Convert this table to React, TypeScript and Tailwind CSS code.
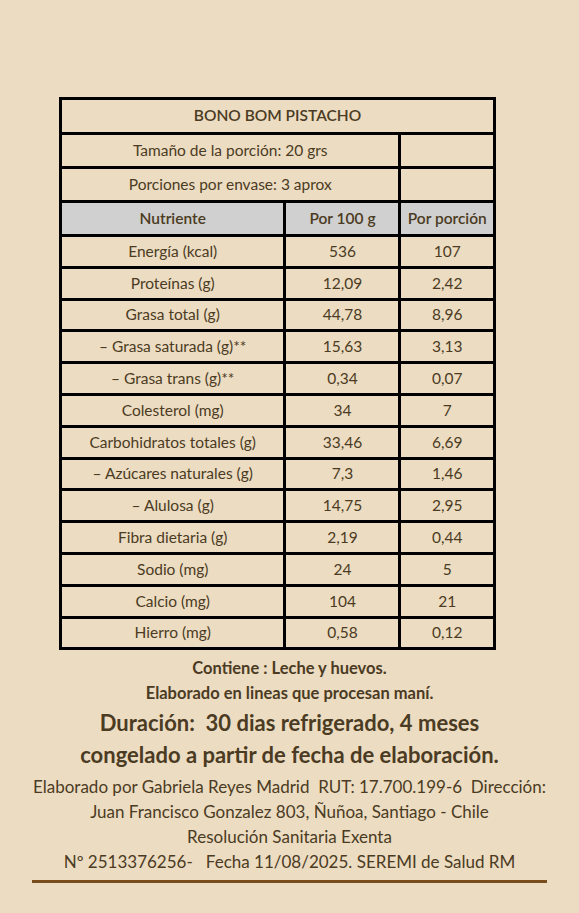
import React from 'react';

const rows: [string, string, string][] = [
  ['Energía (kcal)', '536', '107'],
  ['Proteínas (g)', '12,09', '2,42'],
  ['Grasa total (g)', '44,78', '8,96'],
  ['– Grasa saturada (g)**', '15,63', '3,13'],
  ['– Grasa trans (g)**', '0,34', '0,07'],
  ['Colesterol (mg)', '34', '7'],
  ['Carbohidratos totales (g)', '33,46', '6,69'],
  ['– Azúcares naturales (g)', '7,3', '1,46'],
  ['– Alulosa (g)', '14,75', '2,95'],
  ['Fibra dietaria (g)', '2,19', '0,44'],
  ['Sodio (mg)', '24', '5'],
  ['Calcio (mg)', '104', '21'],
  ['Hierro (mg)', '0,58', '0,12'],
];

export default function App() {
  return (
    <div className="min-h-[913px] w-[579px] bg-[#ecdcc2] text-[#4b3b22] font-['Lato','Open_Sans',sans-serif] pt-[97px]">
      {/* TABLA NUTRICIONAL */}
      <table className="ml-[59px] w-[437px] border-collapse border-[3px] border-black text-[15.5px] text-center">
        <colgroup>
          <col className="w-[226px]" />
          <col className="w-[116px]" />
          <col className="w-[95px]" />
        </colgroup>
        <tbody>
          <tr className="h-[35px]">
            <td colSpan={3} className="border-[3px] border-black font-semibold">BONO BOM PISTACHO</td>
          </tr>
          <tr className="h-[34px]">
            <td colSpan={2} className="border-[3px] border-black">Tamaño de la porción: 20 grs</td>
            <td className="border-[3px] border-black"></td>
          </tr>
          <tr className="h-[34px]">
            <td colSpan={2} className="border-[3px] border-black">Porciones por envase: 3 aprox</td>
            <td className="border-[3px] border-black"></td>
          </tr>
          <tr className="h-[34px] bg-[#d0d0d0] font-semibold">
            <td className="border-[3px] border-black">Nutriente</td>
            <td className="border-[3px] border-black">Por 100 g</td>
            <td className="border-[3px] border-black">Por porción</td>
          </tr>
          {rows.map((r, i) => (
            <tr key={i} className="h-[31.8px]">
              <td className="border-[3px] border-black">{r[0]}</td>
              <td className="border-[3px] border-black">{r[1]}</td>
              <td className="border-[3px] border-black">{r[2]}</td>
            </tr>
          ))}
        </tbody>
      </table>

      <div className="mt-[6px] text-center font-bold text-[16.5px] leading-[25px]">
        <p>Contiene : Leche y huevos.</p>
        <p>Elaborado en lineas que procesan maní.</p>
      </div>
      <div className="mt-[1px] text-center font-bold text-[22px] leading-[32px]">
        <p>Duración:&nbsp; 30 dias refrigerado, 4 meses</p>
        <p>congelado a partir de fecha de elaboración.</p>
      </div>
      <div className="mt-[3px] text-center text-[17px] leading-[25px]">
        <p>Elaborado por Gabriela Reyes Madrid&nbsp; RUT: 17.700.199-6&nbsp; Dirección:</p>
        <p>Juan Francisco Gonzalez 803, Ñuñoa, Santiago - Chile</p>
        <p>Resolución Sanitaria Exenta</p>
        <p>Nº 2513376256- &nbsp; Fecha 11/08/2025. SEREMI de Salud RM</p>
      </div>
      <div className="mx-[32px] mt-[6px] h-[3px] bg-[#7a4e1c]" />
    </div>
  );
}
